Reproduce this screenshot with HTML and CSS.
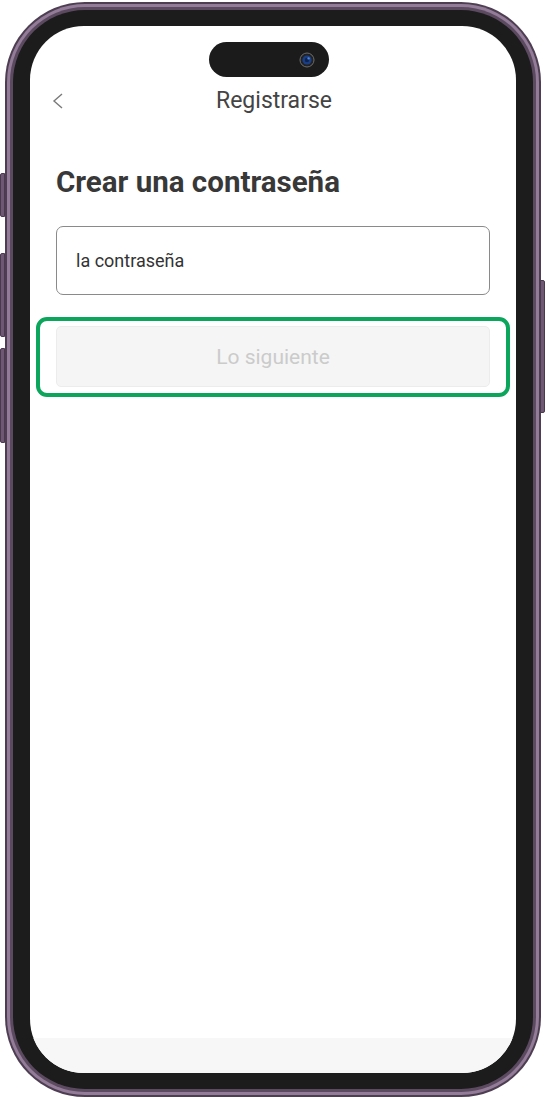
FILE: index.html
```html
<!DOCTYPE html>
<html lang="es">
<head>
<meta charset="utf-8">
<title>Registrarse</title>
<link rel="stylesheet" href="styles.css">
</head>
<body>
<div class="phone">
  <span class="side-btn left b1"></span>
  <span class="side-btn left b2"></span>
  <span class="side-btn left b3"></span>
  <span class="side-btn right b4"></span>
  <div class="rim-light">
    <div class="rim-dark">
      <div class="bezel">
        <div class="screen">
          <div class="island">
            <svg class="camera" width="16" height="16" viewBox="0 0 16 16">
              <circle cx="8" cy="8" r="7" fill="#222" stroke="#6d6d6d" stroke-width="1"/>
              <circle cx="8" cy="8" r="4.6" fill="#1b3f86"/>
              <circle cx="8" cy="8" r="2.2" fill="#0e2350"/>
              <circle cx="9.6" cy="6.4" r="1.2" fill="#4f86d6"/>
            </svg>
          </div>
          <main class="content">
            <header class="topbar">
              <svg class="back" width="12" height="16" viewBox="0 0 12 16">
                <polyline points="10,1 2,8 10,15" fill="none" stroke="#7a7a7a" stroke-width="1.4"/>
              </svg>
              <h1 class="topbar-title">Registrarse</h1>
            </header>
            <h2 class="heading">Crear una contraseña</h2>
            <div class="field">la contraseña</div>
            <div class="highlight">
              <button class="next" type="button">Lo siguiente</button>
            </div>
          </main>
          <footer class="bottom-bar"></footer>
        </div>
      </div>
    </div>
  </div>
</div>
</body>
</html>
```
FILE: styles.css
```css
* { box-sizing: border-box; }
html, body { margin: 0; padding: 0; background: #ffffff; }
body { font-family: Roboto, "Noto Sans", Arial, sans-serif; }

.phone {
  position: relative;
  margin: 2px 0 0 5px;
  width: 536px;
  height: 1095px;
  border-radius: 80px;
  background: #4e3e52;
  padding: 2px;
}
.rim-light {
  height: 100%;
  border-radius: 78px;
  background: #927c97;
  padding: 3px;
}
.rim-dark {
  height: 100%;
  border-radius: 75px;
  background: #5c4a60;
  padding: 3px;
}
.bezel {
  height: 100%;
  border-radius: 72px;
  background: #1c1c1c;
  padding: 16px 17px 16px 17px;
}
.screen {
  position: relative;
  height: 100%;
  border-radius: 54px;
  background: #ffffff;
  overflow: hidden;
  display: flex;
  flex-direction: column;
}

.side-btn {
  position: absolute;
  width: 5px;
  background: #6e5873;
  border: 1px solid #4a3a4e;
}
.side-btn.left { left: -5px; border-radius: 2px 0 0 2px; }
.side-btn.right { right: -4px; border-radius: 0 2px 2px 0; }
.b1 { top: 171px; height: 44px; }
.b2 { top: 251px; height: 84px; }
.b3 { top: 346px; height: 95px; }
.b4 { top: 278px; height: 133px; }

.island {
  position: absolute;
  top: 16px;
  left: 179px;
  width: 120px;
  height: 35px;
  border-radius: 18px;
  background: #1b1b1b;
}
.camera { position: absolute; left: 90px; top: 10px; }

.content {
  flex: 1;
  padding-top: 52px;
}
.topbar {
  position: relative;
  height: 44px;
  display: flex;
  align-items: center;
  justify-content: center;
}
.back { position: absolute; left: 22px; top: 15px; }
.topbar-title {
  margin: 0 0 0 2px;
  font-size: 23px;
  font-weight: 400;
  color: #444444;
}
.heading {
  margin: 42px 0 0 26px;
  font-size: 29.5px;
  line-height: 36px;
  font-weight: 700;
  color: #383838;
}
.field {
  margin: 26px 26px 0;
  height: 69px;
  border: 1.5px solid #8a8a8a;
  border-radius: 7px;
  padding: 0 0 0 19px;
  display: flex;
  align-items: center;
  font-size: 18px;
  color: #333333;
}
.highlight {
  margin: 22px 6px 0;
  border: 4px solid #0ba55c;
  border-radius: 11px;
  padding: 5px 16px 6px;
}
.next {
  display: block;
  width: 100%;
  height: 61px;
  border: 1px solid #ececec;
  border-radius: 5px;
  background: #f5f5f5;
  font-family: inherit;
  font-size: 21px;
  color: #cbcbcb;
  cursor: default;
}
.bottom-bar {
  height: 35px;
  background: #f7f7f7;
}
```
